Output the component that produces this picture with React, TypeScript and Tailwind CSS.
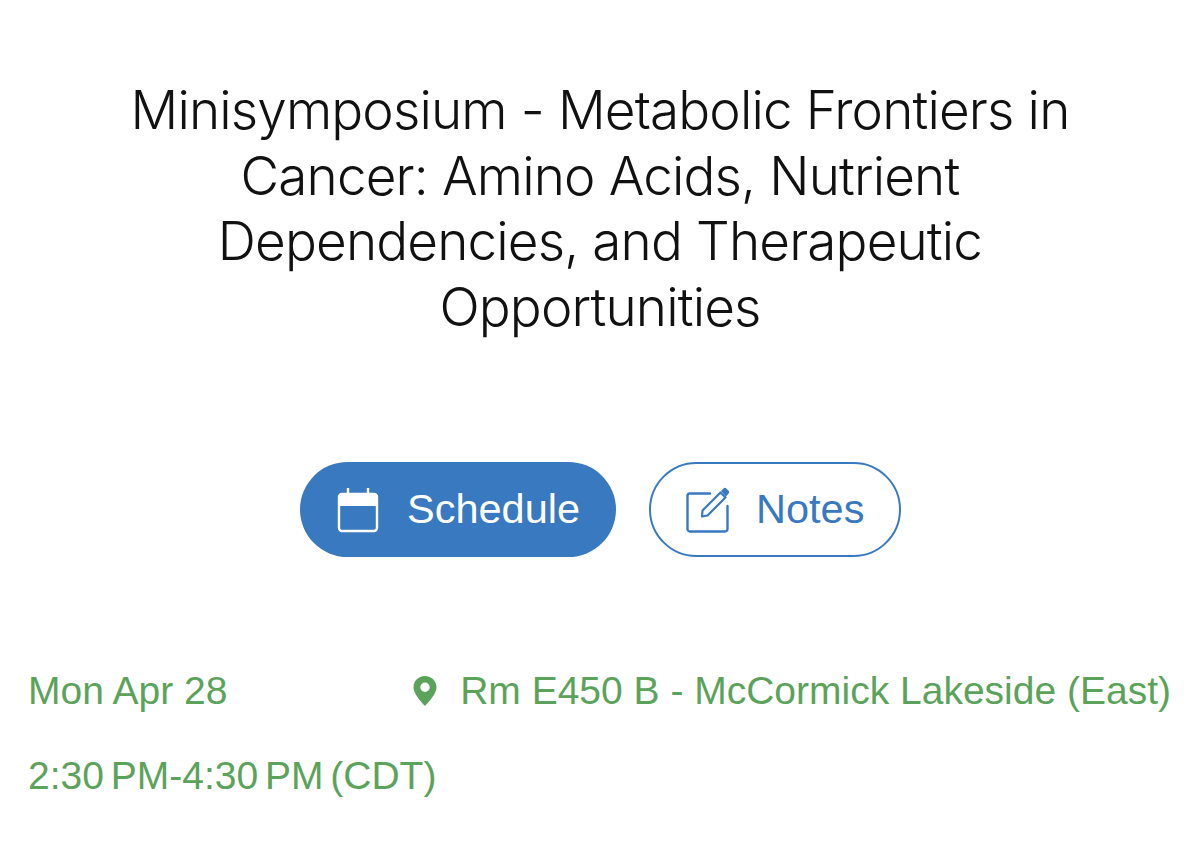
import React from "react";

function CalendarIcon() {
  return (
    <svg width="42" height="46" viewBox="0 0 42 46" fill="none" className="text-white shrink-0">
      <rect x="2" y="7" width="38" height="37" rx="3" stroke="currentColor" strokeWidth="2.400" />
      <path d="M2 9a3 3 0 0 1 3-3h32a3 3 0 0 1 3 3v10H2z" fill="currentColor" />
      <rect x="9.800" y="1" width="2.400" height="7" fill="currentColor" />
      <rect x="29.800" y="1" width="2.400" height="7" fill="currentColor" />
    </svg>
  );
}

function NoteIcon() {
  return (
    <svg width="48" height="46" viewBox="0 0 48 46" fill="none" className="text-[#3879bf] shrink-0">
      <path d="M24 6.500H4a2.500 2.500 0 0 0-2.500 2.500v33a2.500 2.500 0 0 0 2.500 2.500h35a2.500 2.500 0 0 0 2.500-2.500V19" stroke="currentColor" strokeWidth="2.400" strokeLinecap="round" />
      <path d="M16.500 23.500 34.500 5.500l5 5-18 18-5.500 1z" stroke="currentColor" strokeWidth="2.200" strokeLinejoin="round" />
      <path d="M35 4 37.500 1.500a2 2 0 0 1 2.800 0l2.300 2.300a2 2 0 0 1 0 2.800L40 9.500z" fill="currentColor" />
    </svg>
  );
}

function PinIcon() {
  return (
    <svg width="26" height="32" viewBox="0 0 26 32" className="shrink-0">
      <path fillRule="evenodd" clipRule="evenodd" d="M13 1C6.400 1 1.500 6 1.500 12.300 1.500 20 13 31 13 31s11.500-11 11.500-18.700C24.500 6 19.600 1 13 1zm0 16a4.700 4.700 0 1 1 0-9.400 4.700 4.700 0 0 1 0 9.400z" fill="#5ba35a" />
    </svg>
  );
}

export default function App() {
  return (
    <div className="w-[1200px] h-[848px] bg-white overflow-hidden font-['Liberation_Sans',sans-serif]">
      <h1 className="pt-[78px] px-[100px] text-center text-[53px] leading-[65.500px] font-light tracking-[-0.85px] text-[#111] font-['Inter','Liberation_Sans',sans-serif]">
        Minisymposium - Metabolic Frontiers in Cancer: Amino Acids, Nutrient Dependencies, and Therapeutic Opportunities
      </h1>
      <div className="mt-[122px] pl-[1px] flex justify-center gap-[33px]">
        <div className="w-[316px] h-[95px] rounded-[48px] bg-[#3879bf] pl-[37px] flex items-center gap-[28px] text-white text-[41.500px]">
          <CalendarIcon />
          <span>Schedule</span>
        </div>
        <div className="w-[252px] h-[95px] rounded-[48px] border-2 border-[#3879bf] bg-white pl-[35px] flex items-center gap-[22px] text-[#3879bf] text-[41.500px]">
          <NoteIcon />
          <span>Notes</span>
        </div>
      </div>
      <div className="mt-[105px] pl-[28px] pr-[29px] flex justify-between items-center text-[#5ba35a] text-[39px]">
        <span>Mon Apr 28</span>
        <span className="flex items-center gap-[22px]">
          <PinIcon />
          Rm E450 B - McCormick Lakeside (East)
        </span>
      </div>
      <div className="mt-[26px] pl-[28px] text-[#5ba35a] text-[39px] [word-spacing:-4px]">
        2:30 PM-4:30 PM (CDT)
      </div>
    </div>
  );
}
